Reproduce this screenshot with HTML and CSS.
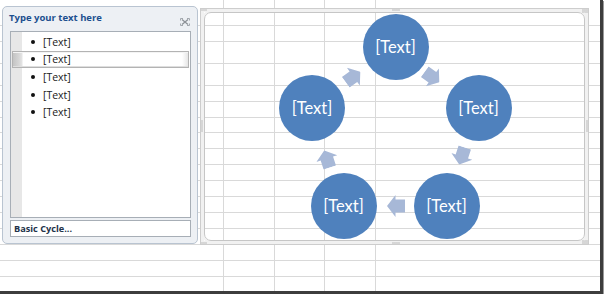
FILE: index.html
```html
<!DOCTYPE html>
<html lang="en">
<head>
<meta charset="utf-8">
<title>SmartArt Basic Cycle</title>
<link rel="stylesheet" href="styles.css">
</head>
<body>
<div class="window">
  <div class="grid">
    <div class="r h26"></div>
    <div class="r h16"></div>
    <div class="r h22"></div>
    <div class="r h22"></div>
    <div class="r h16"></div>
    <div class="r h16"></div>
    <div class="r h15"></div>
    <div class="r h16"></div>
    <div class="r h16"></div>
    <div class="r h16"></div>
    <div class="r h16"></div>
    <div class="r h16"></div>
    <div class="r h16"></div>
    <div class="r h16"></div>
    <div class="r h16"></div>
    <div class="r h16"></div>
  </div>

  <aside class="pane">
    <div class="pane-head">
      <span class="pane-title">Type your text here</span>
      <svg class="close" width="10" height="8" viewBox="0 0 10 8">
        <path d="M2 1.5 L8 6.5 M8 1.5 L2 6.5" stroke="#8c9197" stroke-width="1.3" fill="none"/>
        <path d="M0.5 0.5 h2.5 M0.5 0.5 v2 M9.5 0.5 h-2.5 M9.5 0.5 v2 M0.5 7.5 h2.5 M0.5 7.5 v-2 M9.5 7.5 h-2.5 M9.5 7.5 v-2" stroke="#a3a8ae" stroke-width="1" fill="none"/>
      </svg>
    </div>
    <div class="list">
      <ul>
        <li><span class="dot"></span>[Text]</li>
        <li class="sel"><span class="dot"></span>[Text]</li>
        <li><span class="dot"></span>[Text]</li>
        <li><span class="dot"></span>[Text]</li>
        <li><span class="dot"></span>[Text]</li>
      </ul>
    </div>
    <div class="footer">Basic Cycle...</div>
  </aside>

  <div class="frame">
    <div class="frame-inner"></div>
    <span class="grip g-tl"></span>
    <span class="grip g-tm"></span>
    <span class="grip g-tr"></span>
    <span class="grip g-ml"></span>
    <span class="grip g-mr"></span>
    <span class="grip g-bl"></span>
    <span class="grip g-bm"></span>
    <span class="grip g-br"></span>

    <svg class="arrow a1" viewBox="0 0 18 22"><path d="M0 4.5H9.5V0L18 11 9.5 22V17.5H0Z"/></svg>
    <svg class="arrow a2" viewBox="0 0 18 22"><path d="M0 4.5H9.5V0L18 11 9.5 22V17.5H0Z"/></svg>
    <svg class="arrow a3" viewBox="0 0 18 22"><path d="M0 4.5H9.5V0L18 11 9.5 22V17.5H0Z"/></svg>
    <svg class="arrow a4" viewBox="0 0 18 22"><path d="M0 4.5H9.5V0L18 11 9.5 22V17.5H0Z"/></svg>
    <svg class="arrow a5" viewBox="0 0 18 22"><path d="M0 4.5H9.5V0L18 11 9.5 22V17.5H0Z"/></svg>

    <div class="node n-top">[Text]</div>
    <div class="node n-right">[Text]</div>
    <div class="node n-br">[Text]</div>
    <div class="node n-bl">[Text]</div>
    <div class="node n-left">[Text]</div>
  </div>
</div>
</body>
</html>
```

FILE: styles.css
```css
html, body {
  margin: 0;
  padding: 0;
  background: #ffffff;
  overflow: hidden;
}

.window {
  position: relative;
  width: 600px;
  height: 291px;
  border-right: 3px solid #3d3d3d;
  border-bottom: 3px solid #3d3d3d;
  box-shadow: 1px 1px 0 #9a9a9a;
  background: #ffffff;
}

/* spreadsheet grid */
.grid {
  display: flex;
  flex-direction: column;
  height: 291px;
  background-image:
    linear-gradient(#d9d9d9, #d9d9d9),
    linear-gradient(#d9d9d9, #d9d9d9),
    linear-gradient(#d9d9d9, #d9d9d9),
    linear-gradient(#d9d9d9, #d9d9d9);
  background-position: 223px 0, 274px 0, 324px 0, 375px 0;
  background-size: 1px 100%;
  background-repeat: no-repeat;
}
.r {
  flex: none;
  box-sizing: border-box;
  border-bottom: 1px solid #d9d9d9;
}
.h26 { height: 26px; }
.h22 { height: 22px; }
.h16 { height: 16px; }
.h15 { height: 15px; }

/* text pane */
.pane {
  position: absolute;
  left: 2px;
  top: 6px;
  width: 196px;
  height: 238px;
  box-sizing: border-box;
  border: 1px solid #b9c4d1;
  border-radius: 5px;
  background: #edf0f4;
  padding: 0 6px 6px 7px;
  display: flex;
  flex-direction: column;
}
.pane-head {
  height: 24px;
  flex: none;
  display: flex;
  align-items: flex-start;
  justify-content: space-between;
}
.pane-title {
  margin-top: 5px;
  margin-left: -1px;
  font: bold 9.5px/12px "Open Sans", sans-serif;
  color: #1c4f8f;
}
.close {
  margin-top: 11px;
  margin-right: 1px;
}
.list {
  height: 187px;
  flex: none;
  box-sizing: border-box;
  border: 1px solid #a7aeb6;
  background: linear-gradient(to right, #e7e7e7 0, #e7e7e7 11px, #ffffff 11px);
}
.list ul {
  margin: 0;
  padding: 1px 0 0;
  list-style: none;
}
.list li {
  height: 17.6px;
  box-sizing: border-box;
  display: flex;
  align-items: center;
  padding-left: 20px;
  font: 10.5px "Open Sans", sans-serif;
  color: #1a1a1a;
}
.dot {
  width: 4px;
  height: 4px;
  border-radius: 50%;
  background: #111;
  margin-right: 8px;
}
.list li.sel {
  margin: 0 1px;
  padding-left: 18px;
  border: 1px solid #b3b3b3;
  background:
    linear-gradient(to right, #c4c4c4 0, #d6d6d6 6px, #e4e4e4 9px, #ffffff 10px, #ffffff calc(100% - 6px), #e6e6e6 100%);
  box-shadow: inset 0 -1px 0 #dedede, inset 0 1px 0 #f4f4f4;
}
.footer {
  margin-top: 2px;
  height: 17px;
  flex: none;
  box-sizing: border-box;
  border: 1px solid #a7aeb6;
  background: #ffffff;
  display: flex;
  align-items: center;
  padding-left: 3px;
  font: bold 9.2px "Open Sans", sans-serif;
  color: #23324a;
}

/* SmartArt frame */
.frame {
  position: absolute;
  left: 200px;
  top: 8px;
  width: 389px;
  height: 237px;
  box-sizing: border-box;
  border: 1px solid #cdcdcd;
  box-shadow: inset 0 0 0 3px #f1f1f1;
}
.frame-inner {
  position: absolute;
  left: 3px;
  top: 3px;
  right: 3px;
  bottom: 3px;
  border: 1px solid #c6c6c6;
  border-radius: 7px;
  box-shadow: 0 0 0 2px #f1f1f1;
}
.grip {
  position: absolute;
  background-image: radial-gradient(circle, #b8b8b8 0.6px, transparent 0.8px);
  background-size: 2px 2px;
}
.g-tl { left: 0; top: 0; width: 6px; height: 2px; }
.g-tm { left: 191px; top: 0; width: 8px; height: 2px; }
.g-tr { right: 0; top: 0; width: 6px; height: 4px; }
.g-ml { left: 0; top: 111px; width: 2px; height: 12px; }
.g-mr { right: 0; top: 111px; width: 2px; height: 12px; }
.g-bl { left: 0; bottom: 0; width: 6px; height: 2px; }
.g-bm { left: 191px; bottom: 0; width: 8px; height: 2px; }
.g-br { right: 0; bottom: 0; width: 6px; height: 4px; }

.node {
  position: absolute;
  width: 66px;
  height: 66px;
  border-radius: 50%;
  background: #4f81bd;
  color: #ffffff;
  display: flex;
  align-items: center;
  justify-content: center;
  font: 16.5px "Lato", sans-serif;
}
.n-top   { left: 161.5px; top: 4.5px; }
.n-left  { left: 78px;    top: 65.5px; }
.n-right { left: 244.5px; top: 65.5px; }
.n-bl    { left: 109.5px; top: 163.5px; }
.n-br    { left: 212.5px; top: 163.5px; }

.arrow {
  position: absolute;
  width: 18px;
  height: 22px;
  fill: #a7b8d7;
}
.a1 { left: 142.9px; top: 57.3px; transform: rotate(-36deg); }
.a2 { left: 222.1px; top: 56.8px; transform: rotate(36deg); }
.a3 { left: 251.8px; top: 136px;  transform: rotate(108deg); }
.a4 { left: 185.5px; top: 186px;  transform: rotate(180deg); }
.a5 { left: 117.4px; top: 139px;  transform: rotate(252deg); }
```
